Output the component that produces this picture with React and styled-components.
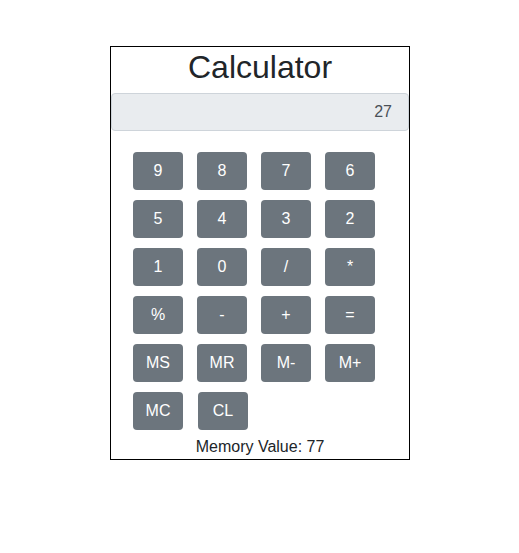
import React from "react";
import styled, { createGlobalStyle } from "styled-components";

const Global = createGlobalStyle`
  html, body { margin: 0; padding: 0; background: #fff; }
  body {
    font-family: "Liberation Sans", Arial, sans-serif;
    color: #212529;
    font-size: 16px;
    line-height: 1.5;
  }
`;

const Page = styled.div`
  padding: 46px 0 0 110px;
`;

const Box = styled.div`
  width: 300px;
  box-sizing: border-box;
  border: 1px solid #000;
  display: flex;
  flex-direction: column;
`;

const Title = styled.h1`
  margin: 0;
  height: 38px;
  font-size: 32px;
  font-weight: 500;
  line-height: 40px;
  text-align: center;
  color: #212529;
`;

const Display = styled.div`
  margin-top: 8px;
  height: 38px;
  box-sizing: border-box;
  padding: 6px 16px 6px 12px;
  background: #e9ecef;
  border: 1px solid #ced4da;
  border-radius: 4px;
  text-align: right;
  color: #495057;
  font-size: 16px;
  line-height: 24px;
`;

const Keys = styled.div`
  margin-top: 21px;
  padding-left: 22px;
  display: grid;
  grid-template-columns: repeat(4, 50px);
  column-gap: 14px;
  row-gap: 10px;
`;

const Key = styled.button`
  width: 50px;
  margin-left: ${(p) => (p.$shift ? "1px" : "0")};
  height: 38px;
  padding: 0;
  border: none;
  border-radius: 4px;
  background: #6c757d;
  color: #fff;
  font-family: "Liberation Sans", Arial, sans-serif;
  font-size: 16px;
  line-height: 24px;
  cursor: pointer;
`;

const Memory = styled.div`
  margin-top: 5px;
  text-align: center;
  font-size: 16px;
  line-height: 24px;
  color: #212529;
`;

const keys = [
  "9", "8", "7", "6",
  "5", "4", "3", "2",
  "1", "0", "/", "*",
  "%", "-", "+", "=",
  "MS", "MR", "M-", "M+",
  "MC", "CL",
];

export default function App() {
  return (
    <>
      <Global />
      <Page>
        <Box>
          <Title>Calculator</Title>
          <Display>27</Display>
          <Keys>
            {keys.map((k) => (
              <Key key={k} $shift={k === "CL"}>
                {k}
              </Key>
            ))}
          </Keys>
          <Memory>Memory Value: 77</Memory>
        </Box>
      </Page>
    </>
  );
}
